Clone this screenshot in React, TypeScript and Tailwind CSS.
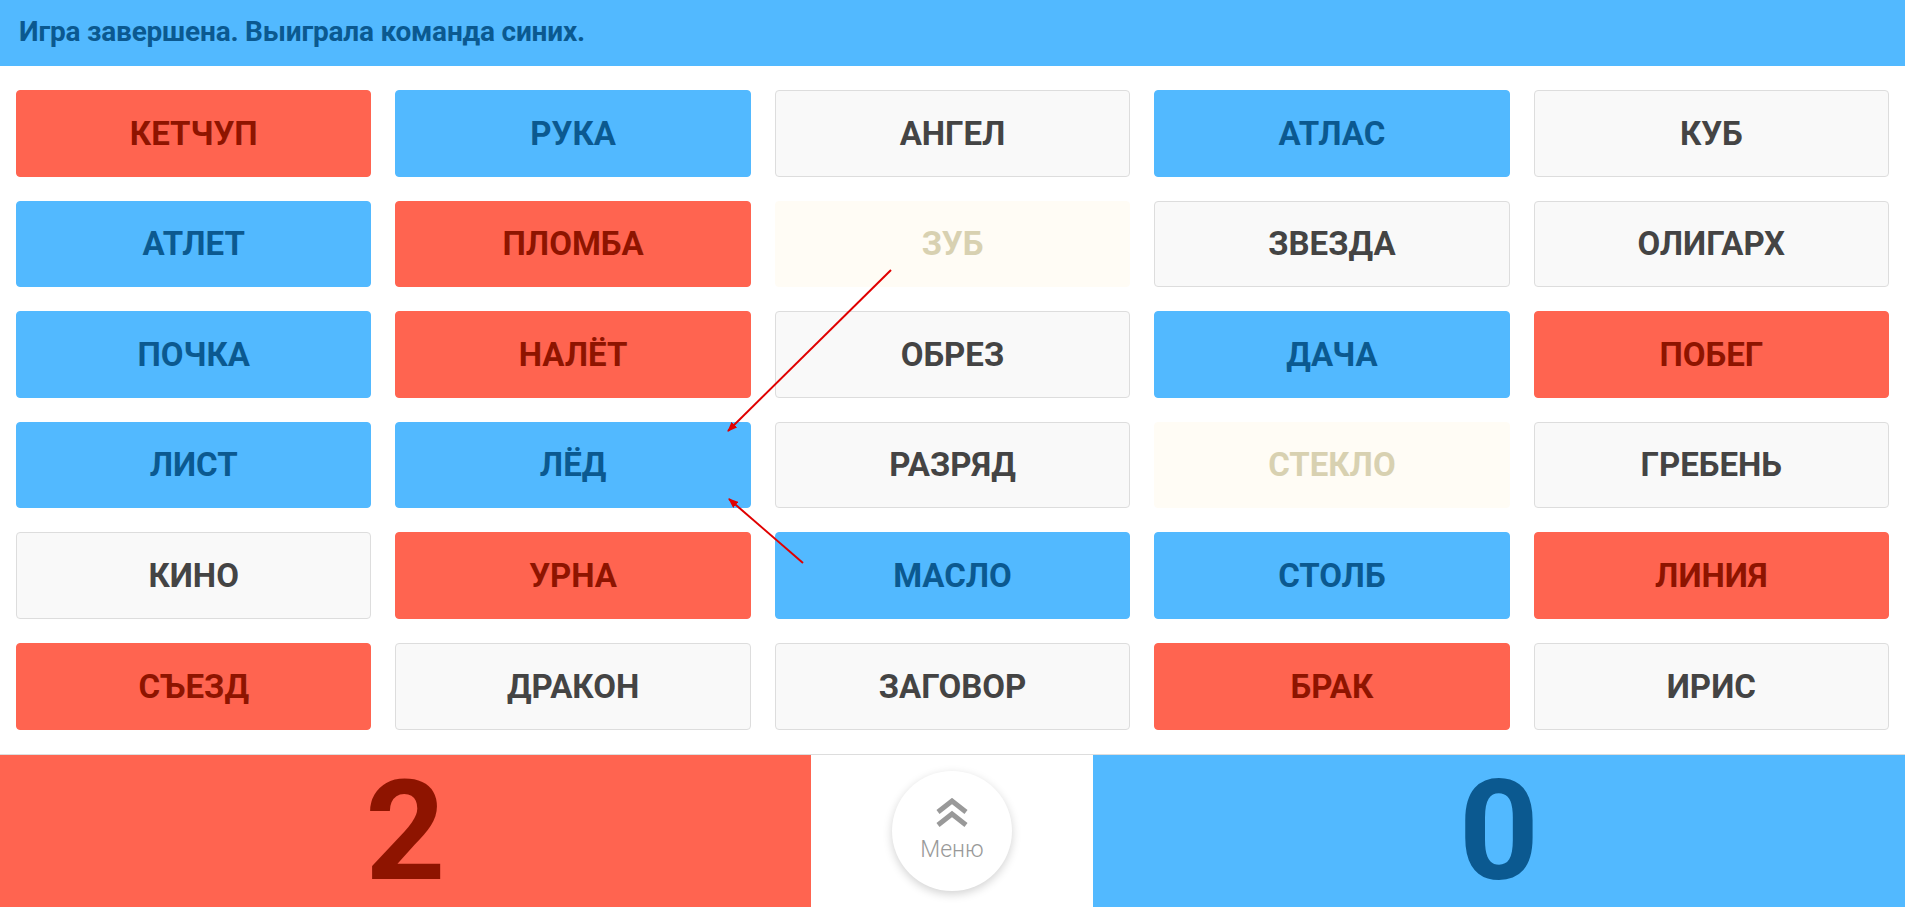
import React from "react";

type Kind = "red" | "blue" | "neutral" | "faded";

const words: [string, Kind][] = [
  ["КЕТЧУП", "red"], ["РУКА", "blue"], ["АНГЕЛ", "neutral"], ["АТЛАС", "blue"], ["КУБ", "neutral"],
  ["АТЛЕТ", "blue"], ["ПЛОМБА", "red"], ["ЗУБ", "faded"], ["ЗВЕЗДА", "neutral"], ["ОЛИГАРХ", "neutral"],
  ["ПОЧКА", "blue"], ["НАЛЁТ", "red"], ["ОБРЕЗ", "neutral"], ["ДАЧА", "blue"], ["ПОБЕГ", "red"],
  ["ЛИСТ", "blue"], ["ЛЁД", "blue"], ["РАЗРЯД", "neutral"], ["СТЕКЛО", "faded"], ["ГРЕБЕНЬ", "neutral"],
  ["КИНО", "neutral"], ["УРНА", "red"], ["МАСЛО", "blue"], ["СТОЛБ", "blue"], ["ЛИНИЯ", "red"],
  ["СЪЕЗД", "red"], ["ДРАКОН", "neutral"], ["ЗАГОВОР", "neutral"], ["БРАК", "red"], ["ИРИС", "neutral"],
];

const kindClass: Record<Kind, string> = {
  red: "bg-[#ff6450] border-[#ff6450] text-[#8e1400]",
  blue: "bg-[#52b9ff] border-[#52b9ff] text-[#0b5990]",
  neutral: "bg-[#f9f9f9] border-[#dddddd] text-[#444444]",
  faded: "bg-[#fffcf5] border-[#fffcf5] text-[#d8d1b1]",
};

export default function App() {
  return (
    <div
      className="relative w-[1905px] bg-white"
      style={{ fontFamily: "Roboto, 'Noto Sans', sans-serif" }}
    >
      <div className="h-[66px] bg-[#52b9ff] flex items-center pl-[19px] pb-[2px]">
        <span className="text-[28px] font-bold text-[#0b5990] tracking-[-0.2px]">
          Игра завершена. Выиграла команда синих.
        </span>
      </div>

      <div className="grid grid-cols-5 gap-x-6 gap-y-6 px-4 pt-6 pb-6">
        {words.map(([w, k]) => (
          <div
            key={w}
            className={`h-[86.6px] rounded-[4px] border flex items-center justify-center text-[33px] font-bold ${kindClass[k]}`}
          >
            {w}
          </div>
        ))}
      </div>

      <div className="flex h-[153px] border-t border-[#dddddd]">
        <div className="w-[811px] bg-[#ff6450] flex items-center justify-center text-[140px] font-bold text-[#8e1400] leading-none">
          2
        </div>
        <div className="w-[282px] bg-white flex items-center justify-center">
          <div className="w-[120px] h-[120px] rounded-full bg-white shadow-[0_3px_10px_rgba(0,0,0,0.18)] flex flex-col items-center justify-center">
            <svg width="34" height="30" viewBox="0 0 34 30" className="-mt-[2px]">
              <polyline points="3,14 17,3 31,14" fill="none" stroke="#999999" strokeWidth="5" />
              <polyline points="3,27 17,16 31,27" fill="none" stroke="#999999" strokeWidth="5" />
            </svg>
            <span className="text-[23px] font-light text-[#999999] leading-none mt-[10px]">Меню</span>
          </div>
        </div>
        <div className="flex-1 bg-[#52b9ff] flex items-center justify-center text-[140px] font-bold text-[#0b5990] leading-none">
          0
        </div>
      </div>

      <svg className="absolute inset-0 pointer-events-none" width="1905" height="908">
        <defs>
          <marker id="ah" markerWidth="10" markerHeight="8" refX="9" refY="4" orient="auto" markerUnits="userSpaceOnUse">
            <polygon points="0,0 10,4 0,8" fill="#e00000" />
          </marker>
        </defs>
        <line x1="891" y1="270" x2="728" y2="431" stroke="#e00000" strokeWidth="2" markerEnd="url(#ah)" />
        <line x1="803" y1="563" x2="729" y2="499" stroke="#e00000" strokeWidth="2" markerEnd="url(#ah)" />
      </svg>
    </div>
  );
}
